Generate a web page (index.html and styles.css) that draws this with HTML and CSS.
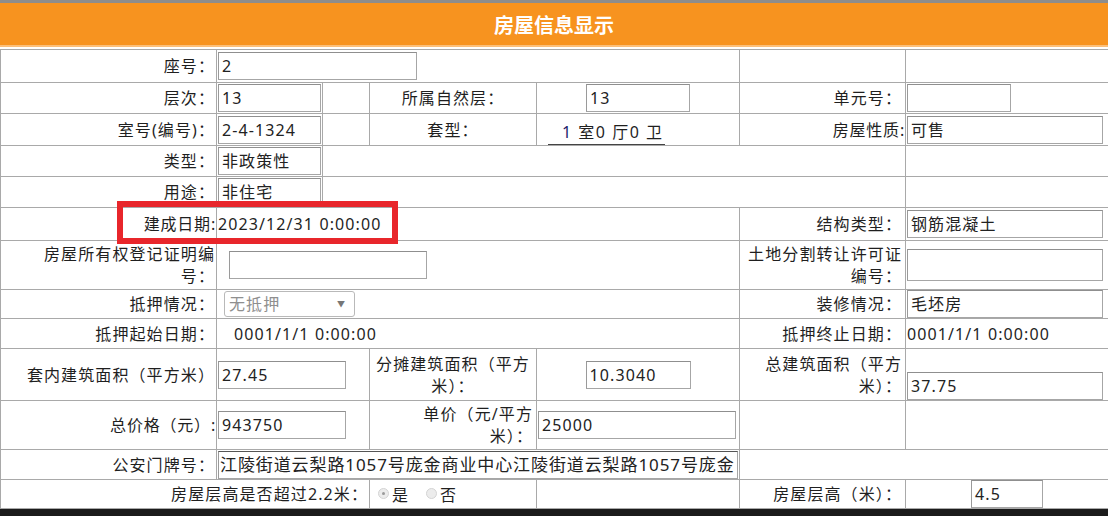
FILE: index.html
```html
<!DOCTYPE html>
<html lang="zh-CN">
<head>
<meta charset="utf-8">
<title>房屋信息显示</title>
<link rel="stylesheet" href="styles.css">
</head>
<body>
<div class="page">
  <div class="header"><span class="title">房屋信息显示</span></div>
  <table class="info">
    <colgroup>
      <col class="w1"><col class="w2"><col class="w3"><col class="w4"><col class="w5"><col class="w6"><col class="w7">
    </colgroup>
    <tr class="h33">
      <td class="lbl">座号：</td>
      <td colspan="4" class="cin"><span class="inp w199">2</span></td>
      <td></td>
      <td></td>
    </tr>
    <tr class="h31">
      <td class="lbl">层次：</td>
      <td class="cin"><span class="inp full">13</span></td>
      <td></td>
      <td class="ctr">所属自然层：</td>
      <td class="cin ctr"><span class="inp w104">13</span></td>
      <td class="lbl pr">单元号：</td>
      <td class="cin"><span class="inp w104"></span></td>
    </tr>
    <tr class="h32">
      <td class="lbl">室号(编号)：</td>
      <td class="cin"><span class="inp full">2-4-1324</span></td>
      <td></td>
      <td class="ctr">套型：</td>
      <td class="rooms"><span class="rm"><span class="num">1</span> 室0 厅0 卫</span></td>
      <td class="lbl tight">房屋性质:</td>
      <td class="cin"><span class="inp w196">可售</span></td>
    </tr>
    <tr class="h31">
      <td class="lbl">类型：</td>
      <td class="cin"><span class="inp full">非政策性</span></td>
      <td colspan="4"></td>
      <td></td>
    </tr>
    <tr class="h31">
      <td class="lbl">用途：</td>
      <td class="cin"><span class="inp full">非住宅</span></td>
      <td colspan="4"></td>
      <td></td>
    </tr>
    <tr class="h33">
      <td class="lbl tight">建成日期:</td>
      <td colspan="4" class="val">2023/12/31 0:00:00</td>
      <td class="lbl pr">结构类型：</td>
      <td class="cin"><span class="inp w196">钢筋混凝土</span></td>
    </tr>
    <tr class="h49">
      <td class="lbl">房屋所有权登记证明编<br>号：</td>
      <td colspan="4" class="cin"><span class="inp w198 ml11"></span></td>
      <td class="lbl pr">土地分割转让许可证<br>编号：</td>
      <td class="cin"><span class="inp w196 h32"></span></td>
    </tr>
    <tr class="h29">
      <td class="lbl">抵押情况：</td>
      <td colspan="4" class="cin"><span class="sel">无抵押<span class="arrow">▼</span></span></td>
      <td class="lbl pr">装修情况：</td>
      <td class="cin"><span class="inp w196">毛坯房</span></td>
    </tr>
    <tr class="h30">
      <td class="lbl">抵押起始日期：</td>
      <td colspan="4" class="val pl17">0001/1/1 0:00:00</td>
      <td class="lbl pr">抵押终止日期：</td>
      <td class="val">0001/1/1 0:00:00</td>
    </tr>
    <tr class="h52">
      <td class="lbl">套内建筑面积（平方米）</td>
      <td colspan="2" class="cin"><span class="inp w128">27.45</span></td>
      <td class="ctr">分摊建筑面积（平方<br>米）：</td>
      <td class="cin ctr"><span class="inp w105">10.3040</span></td>
      <td class="lbl pr">总建筑面积（平方<br>米）：</td>
      <td class="cin low"><span class="inp w196">37.75</span></td>
    </tr>
    <tr class="h49">
      <td class="lbl tight">总价格（元）:</td>
      <td colspan="2" class="cin"><span class="inp w128">943750</span></td>
      <td class="lbl pr">单价（元/平方<br>米）：</td>
      <td class="cin"><span class="inp w198">25000</span></td>
      <td></td>
      <td></td>
    </tr>
    <tr class="h30">
      <td class="lbl">公安门牌号：</td>
      <td colspan="4" class="cin"><span class="inp full addr">江陵街道云梨路1057号庞金商业中心江陵街道云梨路1057号庞金</span></td>
      <td colspan="2"></td>
    </tr>
    <tr class="h29">
      <td colspan="3" class="lbl">房屋层高是否超过2.2米：</td>
      <td class="radios"><span class="radio on"></span><span class="rtxt">是</span><span class="radio"></span><span class="rtxt">否</span></td>
      <td></td>
      <td class="lbl pr">房屋层高（米）：</td>
      <td class="cin ctr"><span class="inp w72">4.5</span></td>
    </tr>
  </table>
  <div class="bottom-bar"></div>
  <div class="mark"></div>
</div>
</body>
</html>
```

FILE: styles.css
```css
html, body {
  margin: 0;
  padding: 0;
  background: #ffffff;
}
.page {
  position: relative;
  width: 1108px;
  height: 516px;
  overflow: hidden;
  font-family: "Noto Sans", "Noto Sans CJK SC", sans-serif;
  font-size: 16px;
  letter-spacing: 1.1px;
  color: #1f1f1f;
}
.header {
  height: 42px;
  border-top: 3px solid #8d8d8d;
  border-bottom: 2px solid #fbbf7a;
  background: #f7931f;
  display: flex;
  align-items: center;
  justify-content: center;
  margin-bottom: 2px;
}
.title {
  color: #ffffff;
  font-family: "Noto Sans CJK SC", sans-serif;
  font-weight: 700;
  font-size: 20px;
  letter-spacing: 0;
}
.info {
  width: 1108px;
  table-layout: fixed;
  border-collapse: collapse;
}
.w1 { width: 216px; }
.w2 { width: 106px; }
.w3 { width: 47px; }
.w4 { width: 167px; }
.w5 { width: 203px; }
.w6 { width: 166px; }
.w7 { width: 203px; }
.info td {
  border: 1px solid #a9a9a9;
  padding: 0 3px;
  line-height: 22px;
  vertical-align: middle;
  white-space: nowrap;
  overflow: hidden;
}
.h29 { height: 29px; }
.h30 { height: 30px; }
.h31 { height: 31px; }
.h32 { height: 32px; }
.h33 { height: 33px; }
.h49 { height: 49px; }
.h52 { height: 52px; }
.info td.lbl { text-align: right; padding-right: 1px; }
.info td.lbl.pr { padding-right: 3px; }
.info td.lbl.tight { padding-right: 0; letter-spacing: 0.8px; }
.info td.ctr { text-align: center; }
.info td.cin { padding: 0 1px; }
.info td.val { padding-left: 1px; }
.info td.val.pl17 { padding-left: 17px; }
.info td.low { vertical-align: bottom; padding-bottom: 0; }
.inp {
  display: inline-block;
  vertical-align: middle;
  box-sizing: border-box;
  height: 28px;
  line-height: 26px;
  border: 1px solid #a6a6a6;
  border-top-color: #8f8f8f;
  border-left-color: #9a9a9a;
  background: #ffffff;
  padding-left: 3px;
  text-align: left;
  overflow: hidden;
  white-space: nowrap;
  color: #222;
}
.inp.full { display: block; width: 100%; }
.inp.w72 { width: 72px; }
.inp.w104 { width: 104px; }
.inp.w105 { width: 105px; }
.inp.w128 { width: 128px; }
.inp.w196 { width: 196px; }
.inp.w198 { width: 198px; }
.inp.w199 { width: 199px; }
.inp.h32 { height: 32px; }
.inp.ml11 { margin-left: 11px; }
.inp.addr {
  border-top-color: #555;
  padding-left: 1px;
  font-size: 17px;
  letter-spacing: 0.9px;
}
.info td.rooms {
  text-align: left;
  vertical-align: bottom;
  padding-left: 11px;
}
.rm {
  display: inline-block;
  border-bottom: 1px solid #444;
  line-height: 24px;
  padding: 0 2px 0 14px;
  letter-spacing: 1.5px;
}
.num { color: #1c1c6a; }
.sel {
  display: inline-block;
  vertical-align: middle;
  box-sizing: border-box;
  width: 131px;
  height: 26px;
  line-height: 24px;
  margin-left: 6px;
  padding-left: 4px;
  border: 1px solid #b9b9b9;
  border-radius: 3px;
  color: #8f8f8f;
  position: relative;
}
.arrow {
  position: absolute;
  right: 8px;
  top: 0;
  font-size: 8px;
  color: #777;
}
.info td.radios { padding-left: 8px; }
.radio {
  display: inline-block;
  vertical-align: middle;
  box-sizing: border-box;
  width: 11px;
  height: 11px;
  border-radius: 50%;
  border: 1px solid #d4d4d4;
  background: #ececec;
  margin-right: 3px;
  position: relative;
  top: -1px;
}
.radio.on::after {
  content: "";
  position: absolute;
  left: 3px;
  top: 3px;
  width: 3px;
  height: 3px;
  border-radius: 50%;
  background: #9a9a9a;
}
.rtxt { margin-right: 17px; vertical-align: middle; }
.bottom-bar {
  height: 10px;
  background: #1b1b1b;
}
.mark {
  position: absolute;
  left: 117px;
  top: 201px;
  width: 281px;
  height: 43px;
  box-sizing: border-box;
  border: 6px solid #e8262b;
}
```
